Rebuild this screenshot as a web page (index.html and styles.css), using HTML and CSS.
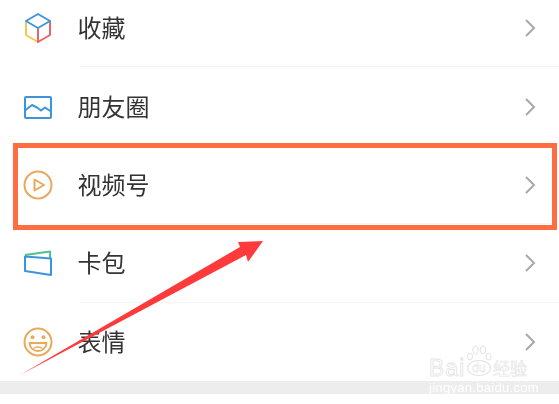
FILE: index.html
```html
<!DOCTYPE html>
<html lang="zh-CN">
<head>
    <meta charset="UTF-8">
    <title>发现</title>
    <link rel="stylesheet" href="styles.css">
</head>
<body>
<div class="page">
    <ul class="menu">
        <li class="menu-row">
            <svg class="menu-icon" viewBox="0 0 30 32" fill="none" stroke-width="2" stroke-linejoin="round" stroke-linecap="round">
                <path d="M3 9 V23 L15 30 V16" stroke="#f5c84c"/>
                <path d="M27 9 V23 L15 30 V16" stroke="#e8646a"/>
                <path d="M15 2 L27 9 L15 16 L3 9 Z" stroke="#3f95dc"/>
            </svg>
            <span class="menu-label">收藏</span>
            <svg class="chevron" viewBox="0 0 12 18"><path d="M2 1 L10 9 L2 17"/></svg>
        </li>
        <li class="menu-row">
            <svg class="menu-icon" viewBox="0 0 30 32" fill="none" stroke="#3d94dc" stroke-width="2" stroke-linejoin="round">
                <rect x="2" y="6" width="26" height="21" rx="1"/>
                <path d="M2 19.5 L9 14 L14 16.5 L18 19.5 L22 16.5 L28 20.5"/>
            </svg>
            <span class="menu-label">朋友圈</span>
            <svg class="chevron" viewBox="0 0 12 18"><path d="M2 1 L10 9 L2 17"/></svg>
        </li>
        <li class="menu-row">
            <svg class="menu-icon" viewBox="0 0 30 32" fill="none" stroke="#e8a95c" stroke-width="2" stroke-linejoin="round">
                <circle cx="15" cy="16" r="13.5"/>
                <path d="M11.5 10.5 L21 16 L11.5 21.5 Z"/>
            </svg>
            <span class="menu-label">视频号</span>
            <svg class="chevron" viewBox="0 0 12 18"><path d="M2 1 L10 9 L2 17"/></svg>
        </li>
        <li class="menu-row">
            <svg class="menu-icon" viewBox="0 0 30 32" fill="none" stroke-width="2" stroke-linejoin="round">
                <path d="M2 8 L27 4.6 V11" stroke="#4dc48c"/>
                <path d="M2 9.6 L28 11.6 V28 L2 24 Z" stroke="#3d94dc"/>
            </svg>
            <span class="menu-label">卡包</span>
            <svg class="chevron" viewBox="0 0 12 18"><path d="M2 1 L10 9 L2 17"/></svg>
        </li>
        <li class="menu-row">
            <svg class="menu-icon" viewBox="0 0 30 32" fill="none" stroke="#e8a95c" stroke-width="2" stroke-linejoin="round">
                <circle cx="15" cy="16" r="13.5"/>
                <circle cx="9.5" cy="11.2" r="2" fill="#e8a95c" stroke="none"/>
                <circle cx="20.5" cy="11.2" r="2" fill="#e8a95c" stroke="none"/>
                <path d="M6.5 17 H23.5 C23 22 19.5 25 15 25 C10.5 25 7 22 6.5 17 Z"/>
                <path d="M10.5 22.5 C13 20.5 17 20.5 19.5 22.5" stroke-width="1.4"/>
            </svg>
            <span class="menu-label">表情</span>
            <svg class="chevron" viewBox="0 0 12 18"><path d="M2 1 L10 9 L2 17"/></svg>
        </li>
    </ul>
    <div class="band"></div>

    <div class="highlight"></div>
    <svg class="arrow" viewBox="0 0 559 404">
        <polygon points="20,375 240,247 238,242 263,241 248,262 246,255"/>
    </svg>

    <div class="watermark">
        <div class="wm-top">
            <span class="wm-bai">Bai</span>
            <span class="wm-du">du</span>
            <span class="wm-jy">经验</span>
            <svg class="wm-paw" viewBox="0 0 26 16" fill="#fff" stroke="#e2e2e2" stroke-width="1">
                <ellipse cx="4" cy="11.5" rx="2.6" ry="3.4"/>
                <ellipse cx="9.5" cy="5" rx="2.8" ry="4"/>
                <ellipse cx="17" cy="5" rx="2.8" ry="4"/>
                <ellipse cx="22.5" cy="11.5" rx="2.6" ry="3.4"/>
            </svg>
        </div>
        <div class="wm-url">jingyan.baidu.com</div>
    </div>
</div>
</body>
</html>
```

FILE: styles.css
```css
body {
    margin: 0;
    background-color: #fff;
    font-family: "Noto Sans CJK SC", "Noto Sans", sans-serif;
}

.page {
    position: relative;
    width: 559px;
    height: 404px;
    overflow: hidden;
    filter: blur(0.35px);
}

.menu {
    list-style: none;
    margin: -11px 0 0;
    padding: 0;
}

.menu-row {
    display: flex;
    align-items: center;
    height: 78.4px;
    box-sizing: border-box;
    padding: 0 23px 0 22.5px;
    position: relative;
}

.menu-row::after {
    content: "";
    position: absolute;
    left: 80px;
    right: 0;
    bottom: 0;
    height: 1px;
    background-color: #f5f5f5;
}

.menu-row:last-child::after {
    display: none;
}

.menu-icon {
    width: 30px;
    height: 32px;
    margin-right: 25px;
}

.menu-label {
    flex: 1;
    font-size: 24px;
    line-height: 32px;
    margin-top: -2px;
    color: #333;
}

.chevron {
    width: 12px;
    height: 18px;
    fill: none;
    stroke: #a8a8a8;
    stroke-width: 2;
}

.band {
    height: 13px;
    background-color: #ededed;
}

.highlight {
    position: absolute;
    left: 13px;
    top: 143px;
    width: 544px;
    height: 87px;
    box-sizing: border-box;
    border: 5px solid #ff6d40;
}

.arrow {
    position: absolute;
    left: 0;
    top: 0;
    width: 559px;
    height: 404px;
    fill: #ff3a3a;
}

.watermark {
    position: absolute;
    left: 429px;
    top: 345px;
    width: 100px;
}

.wm-top {
    position: relative;
    display: flex;
    align-items: center;
    height: 36px;
    padding-top: 9px;
    box-sizing: border-box;
    font-family: "Liberation Sans", sans-serif;
    color: #fff;
    -webkit-text-stroke: 0.8px #e2e2e2;
}

.wm-bai {
    font-size: 23px;
    line-height: 24px;
    letter-spacing: 1px;
    width: 38px;
}

.wm-du {
    box-sizing: border-box;
    width: 24px;
    height: 16px;
    border: 1px solid #e2e2e2;
    border-radius: 50%;
    text-align: center;
    font-size: 12px;
    line-height: 14px;
    -webkit-text-stroke: 0.5px #e2e2e2;
    margin-right: 2px;
}

.wm-jy {
    font-family: "Noto Sans CJK SC", sans-serif;
    font-size: 17px;
    line-height: 20px;
    -webkit-text-stroke: 0.6px #e2e2e2;
}

.wm-paw {
    position: absolute;
    left: 37px;
    top: 0;
    width: 26px;
    height: 16px;
}

.wm-url {
    font-family: "Liberation Sans", sans-serif;
    font-size: 13px;
    line-height: 14px;
    letter-spacing: 0.3px;
    color: #fff;
    white-space: nowrap;
}
```
